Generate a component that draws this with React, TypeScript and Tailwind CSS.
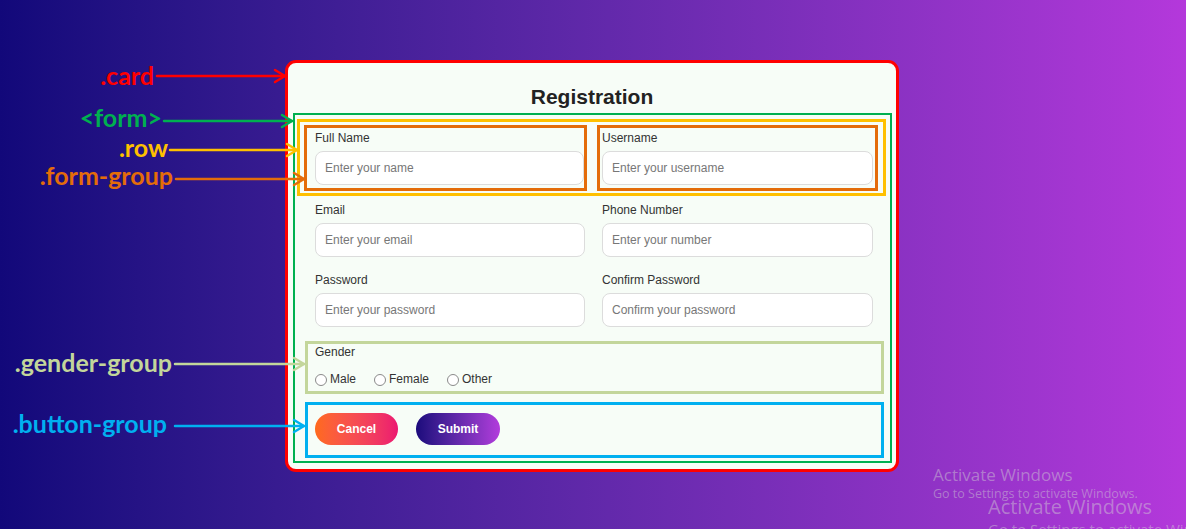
import React from 'react';

function Field({ label, placeholder }: { label: string; placeholder: string }) {
  return (
    <div className="flex flex-col">
      <label className="mb-[5px] text-[12px] leading-[15px] text-[#333]">{label}</label>
      <input
        placeholder={placeholder}
        className="h-[34px] w-full rounded-[8px] border border-[#dcdcdc] bg-white px-[9px] text-[12px] text-[#333] outline-none placeholder:text-[#777]"
      />
    </div>
  );
}

function Radio({ label }: { label: string }) {
  return (
    <label className="flex items-center gap-[3px] text-[12px] leading-[15px] text-[#333]">
      <span className="h-[12px] w-[12px] rounded-full border border-[#8a8a8a] bg-white" />
      {label}
    </label>
  );
}

const notes = [
  { text: '.card', color: 'text-[#ff0000]', box: 'top-[60px] w-[154px]' },
  { text: '<form>', color: 'text-[#00b050]', box: 'top-[102px] w-[162px]' },
  { text: '.row', color: 'text-[#ffc000]', box: 'top-[132px] w-[168px]' },
  { text: '.form-group', color: 'text-[#e46c0a]', box: 'top-[160px] w-[173px]' },
  { text: '.gender-group', color: 'text-[#c3d69b]', box: 'top-[347px] w-[172px]' },
  { text: '.button-group', color: 'text-[#00b0f0]', box: 'top-[408px] w-[167px]' },
];

const arrows = [
  { y: 76, x1: 157, x2: 285, c: '#ff0000' },
  { y: 121, x1: 164, x2: 292, c: '#00b050' },
  { y: 150, x1: 170, x2: 297, c: '#ffc000' },
  { y: 179, x1: 176, x2: 304, c: '#e46c0a' },
  { y: 364, x1: 175, x2: 304, c: '#c3d69b' },
  { y: 426, x1: 175, x2: 304, c: '#00b0f0' },
];

export default function App() {
  return (
    <div className="relative flex h-[529px] w-[1186px] justify-center overflow-hidden bg-linear-to-r from-[#12087a] to-[#b438db] pt-[60px] font-['Liberation_Sans',Arial,sans-serif]">
      <div className="mr-[2px] h-[412px] w-[614px] rounded-[11px] border-[3px] border-[#ff0000] bg-[#f7fdf7] pb-[6px] pt-[22px]">
        <h2 className="text-center text-[21px] font-bold leading-[24px] text-[#222]">Registration</h2>

        <form className="ml-[5px] mr-[4px] mt-[4px] border-2 border-[#00b050] pb-[3px]">
          <div className="ml-[2px] mr-[4px] mt-[4px] flex gap-[10px] border-[3px] border-[#ffc000] pb-[2px] pl-[4px] pr-[5px] pt-[3px]">
            <div className="w-[283px] border-[3px] border-[#e46c0a] pb-[3px] pl-[8px] pt-[3px]">
              <Field label="Full Name" placeholder="Enter your name" />
            </div>
            <div className="flex-1 border-[3px] border-[#e46c0a] pb-[3px] pl-[2px] pr-[2px] pt-[3px]">
              <Field label="Username" placeholder="Enter your username" />
            </div>
          </div>

          <div className="mt-[7px] grid grid-cols-[270px_271px] gap-x-[17px] pl-[20px]">
            <Field label="Email" placeholder="Enter your email" />
            <Field label="Phone Number" placeholder="Enter your number" />
          </div>

          <div className="mt-[16px] grid grid-cols-[270px_271px] gap-x-[17px] pl-[20px]">
            <Field label="Password" placeholder="Enter your password" />
            <Field label="Confirm Password" placeholder="Confirm your password" />
          </div>

          <div className="ml-[10px] mr-[6px] mt-[14px] border-[3px] border-[#c3d69b] pb-[4px] pl-[7px] pt-[1px]">
            <div className="text-[12px] leading-[15px] text-[#333]">Gender</div>
            <div className="mt-[12px] flex gap-[18px]">
              <Radio label="Male" />
              <Radio label="Female" />
              <Radio label="Other" />
            </div>
          </div>

          <div className="ml-[10px] mr-[6px] mt-[8px] flex gap-[18px] border-[3px] border-[#00b0f0] pb-[10px] pl-[7px] pt-[8px]">
            <button type="button" className="h-[32px] w-[83px] rounded-full bg-linear-to-r from-[#ff6a1a] to-[#ec1670] text-[12px] font-bold text-white">
              Cancel
            </button>
            <button type="button" className="h-[32px] w-[84px] rounded-full bg-linear-to-r from-[#1c0a7c] to-[#b23cdc] text-[12px] font-bold text-white">
              Submit
            </button>
          </div>
        </form>
      </div>

      {/* annotation overlay */}
      <svg className="pointer-events-none absolute inset-0" width="1186" height="529">
        {arrows.map((a) => (
          <g key={a.y} stroke={a.c} strokeWidth="2.5" fill="none" strokeLinecap="round" strokeLinejoin="round">
            <line x1={a.x1} y1={a.y} x2={a.x2} y2={a.y} />
            <polyline points={`${a.x2 - 10},${a.y - 6} ${a.x2},${a.y} ${a.x2 - 10},${a.y + 6}`} />
          </g>
        ))}
      </svg>
      {notes.map((n) => (
        <div
          key={n.text}
          className={`absolute left-0 text-right font-['Lato',sans-serif] text-[25px] font-bold leading-[30px] ${n.box} ${n.color}`}
        >
          {n.text}
        </div>
      ))}

      <div className="pointer-events-none absolute left-[933px] top-[464px] font-['Open_Sans',sans-serif] text-[#d4d4d4]/45">
        <div className="text-[17px] leading-[22px]">Activate Windows</div>
        <div className="text-[12.5px] leading-[16px]">Go to Settings to activate Windows.</div>
      </div>
      <div className="pointer-events-none absolute left-[988px] top-[495px] whitespace-nowrap font-['Open_Sans',sans-serif] text-[#d4d4d4]/45">
        <div className="text-[20px] leading-[24px]">Activate Windows</div>
        <div className="text-[15px] leading-[20px]">Go to Settings to activate Windows.</div>
      </div>
    </div>
  );
}
